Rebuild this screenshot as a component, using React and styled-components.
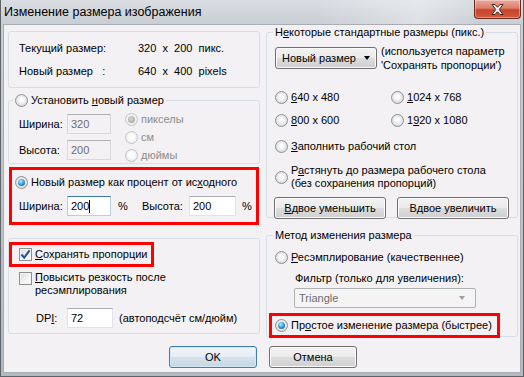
import React from 'react';
import styled, { createGlobalStyle, css } from 'styled-components';

const GlobalStyle = createGlobalStyle`
  html, body {
    margin: 0;
    padding: 0;
  }
  body {
    width: 524px;
    height: 377px;
    overflow: hidden;
    font-family: "Liberation Sans", Arial, sans-serif;
    font-size: 11px;
    color: #000;
  }
`;

/** Resize image dialog */
const App = () => {
  return (
    <>
      <GlobalStyle />
      <St.Window>
        <St.TitleBar>
          <St.TitleText>Изменение размера изображения</St.TitleText>
          <St.CloseButton>
            <svg width="15" height="13" viewBox="0 0 15 13">
              <path
                d="M2 1.5 L5 1.5 L7.5 4.3 L10 1.5 L13 1.5 L9.2 6.5 L13 11.5 L10 11.5 L7.5 8.7 L5 11.5 L2 11.5 L5.8 6.5 Z"
                fill="#fff"
                stroke="#4a1b12"
                strokeWidth="1"
                strokeLinejoin="round"
              />
            </svg>
          </St.CloseButton>
        </St.TitleBar>

        <St.Client>
          <St.Columns>
            <St.Column>
              <St.InfoBox>
                <St.InfoGrid>
                  <span>Текущий размер:</span>
                  <St.Value>320  x  200  пикс.</St.Value>
                  <span>Новый размер   :</span>
                  <St.Value>640  x  400  pixels</St.Value>
                </St.InfoGrid>
              </St.InfoBox>

              <St.Group $h={70} $mt={6}>
                <St.Legend $offset={4}>
                  <St.Option>
                    <St.Radio />
                    <span>
                      Установить <U>н</U>овый размер
                    </span>
                  </St.Option>
                </St.Legend>
                <St.SizeBlock>
                  <St.FieldStack>
                    <St.FieldRow>
                      <St.FieldLabel $w={48}>Ширина:</St.FieldLabel>
                      <St.Input $w={44} $state="disabled">320</St.Input>
                    </St.FieldRow>
                    <St.FieldRow>
                      <St.FieldLabel $w={48}>Высота:</St.FieldLabel>
                      <St.Input $w={44} $state="disabled">200</St.Input>
                    </St.FieldRow>
                  </St.FieldStack>
                  <St.UnitStack>
                    <St.Option $disabled>
                      <St.Radio $checked $disabled />
                      <span>пикселы</span>
                    </St.Option>
                    <St.Option $disabled>
                      <St.Radio $disabled />
                      <span>см</span>
                    </St.Option>
                    <St.Option $disabled>
                      <St.Radio $disabled />
                      <span>дюймы</span>
                    </St.Option>
                  </St.UnitStack>
                </St.SizeBlock>
              </St.Group>

              <St.RedFrame $w={250} $h={58} $mt={3} $ml={1} $pad="6px 0 0 3px">
                <St.Option>
                  <St.Radio $checked />
                  <span>
                    Новый размер как процент от ис<U>х</U>одного
                  </span>
                </St.Option>
                <St.FieldRow $mt={7} $ml={4}>
                  <St.FieldLabel $w={48}>Ширина:</St.FieldLabel>
                  <St.Input $w={44} $state="focus">
                    200
                    <St.Caret />
                  </St.Input>
                  <St.FieldLabel $w={24} $ml={7}>%</St.FieldLabel>
                  <St.FieldLabel $w={47}>Высота:</St.FieldLabel>
                  <St.Input $w={47}>200</St.Input>
                  <St.FieldLabel $ml={6}>%</St.FieldLabel>
                </St.FieldRow>
              </St.RedFrame>

              <St.Group $h={96} $mt={13}>
                <St.RedFrame $w={145} $h={25} $mt={3} $pad="0 0 0 7px" $center>
                  <St.Option>
                    <St.Check $checked>
                      <svg width="11" height="11" viewBox="0 0 11 11">
                        <path
                          d="M1.5 5.5 L4.2 8.6 L9.6 1.4"
                          fill="none"
                          stroke="#1c4fa0"
                          strokeWidth="2"
                        />
                      </svg>
                    </St.Check>
                    <span>
                      <U>С</U>охранять пропорции
                    </span>
                  </St.Option>
                </St.RedFrame>
                <St.Option $top $mt={4} $ml={10}>
                  <St.Check $mt={1} />
                  <span>
                    <U>П</U>овысить резкость после
                    <br />
                    ресэмплирования
                  </span>
                </St.Option>
                <St.FieldRow $mt={11} $ml={27}>
                  <St.FieldLabel $w={31}>
                    DP<U>I</U>:
                  </St.FieldLabel>
                  <St.Input $w={46}>72</St.Input>
                  <St.FieldLabel $ml={6}>(автоподсчёт см/дюйм)</St.FieldLabel>
                </St.FieldRow>
              </St.Group>
            </St.Column>

            <St.Column $right>
              <St.Group $h={192}>
                <St.Legend $offset={6}>
                  Н<U>е</U>которые стандартные размеры (пикс.)
                </St.Legend>
                <St.PresetRow>
                  <St.Combo $w={102} $h={22}>
                    <span>Новый размер</span>
                    <St.Arrow />
                  </St.Combo>
                  <St.Note>
                    (используется параметр
                    <br />
                    'Сохранять пропорции')
                  </St.Note>
                </St.PresetRow>
                <St.SizeGrid>
                  <St.Option>
                    <St.Radio />
                    <span>
                      <U>6</U>40 x 480
                    </span>
                  </St.Option>
                  <St.Option>
                    <St.Radio />
                    <span>
                      <U>1</U>024 x 768
                    </span>
                  </St.Option>
                  <St.Option>
                    <St.Radio />
                    <span>
                      <U>8</U>00 x 600
                    </span>
                  </St.Option>
                  <St.Option>
                    <St.Radio />
                    <span>
                      1<U>9</U>20 x 1080
                    </span>
                  </St.Option>
                </St.SizeGrid>
                <St.Option $mt={13} $ml={8}>
                  <St.Radio />
                  <span>
                    <U>З</U>аполнить рабочий стол
                  </span>
                </St.Option>
                <St.Option $mt={9} $ml={8}>
                  <St.Radio />
                  <span>
                    Р<U>а</U>стянуть до размера рабочего стола
                    <br />
                    (без сохранения пропорций)
                  </span>
                </St.Option>
                <St.ButtonRow $mt={7} $ml={7} $gap={11}>
                  <St.Button $w={112}>
                    <U>В</U>двое уменьшить
                  </St.Button>
                  <St.Button $w={112}>
                    В<U>д</U>вое увеличить
                  </St.Button>
                </St.ButtonRow>
              </St.Group>

              <St.Group $h={108} $mt={11}>
                <St.Legend $offset={6}>Метод изменения размера</St.Legend>
                <St.Option $mt={9} $ml={8}>
                  <St.Radio />
                  <span>
                    <U>Р</U>есэмплирование (качественнее)
                  </span>
                </St.Option>
                <St.FieldLabel $block $mt={6} $ml={28}>
                  Фильтр (только для увеличения):
                </St.FieldLabel>
                <St.Combo $w={182} $h={20} $mt={3} $ml={27} $disabled>
                  <span>Triangle</span>
                  <St.Arrow $disabled />
                </St.Combo>
                <St.RedFrame $w={231} $h={25} $mt={5} $ml={2} $pad="0 0 0 3px" $center>
                  <St.Option>
                    <St.Radio $checked />
                    <span>
                      Пр<U>о</U>стое изменение размера (быстрее)
                    </span>
                  </St.Option>
                </St.RedFrame>
              </St.Group>
            </St.Column>
          </St.Columns>

          <St.ButtonRow $mt={9} $gap={12} $centered>
            <St.Button $w={88} $default>
              OK
            </St.Button>
            <St.Button $w={88}>Отмена</St.Button>
          </St.ButtonRow>
        </St.Client>
      </St.Window>
    </>
  );
};

export default App;

const U = styled.span`
  text-decoration: underline;
  text-underline-offset: 1px;
`;

const offsets = css`
  margin-top: ${({ $mt }) => $mt || 0}px;
  margin-left: ${({ $ml }) => $ml || 0}px;
`;

const St = {
  Window: styled.div`
    width: 524px;
    height: 377px;
    box-sizing: border-box;
    display: flex;
    flex-direction: column;
    border: 1px solid #5e6369;
    border-top: none;
    background: linear-gradient(180deg, #dadee3 0px, #c9ced4 24px, #b3b9c0 100%);
  `,

  TitleBar: styled.div`
    height: 24px;
    flex: none;
    display: flex;
    justify-content: space-between;
    align-items: flex-start;
    background: linear-gradient(90deg, rgba(255, 255, 255, 0) 60%, rgba(255, 255, 255, 0.35) 80%, rgba(255, 255, 255, 0) 92%);
  `,

  TitleText: styled.div`
    padding: 4px 0 0 3px;
    font-size: 12.5px;
    line-height: 16px;
    color: #000;
  `,

  CloseButton: styled.div`
    width: 47px;
    height: 19px;
    box-sizing: border-box;
    margin-right: 2px;
    display: flex;
    align-items: center;
    justify-content: center;
    border: 1px solid #6b2a1f;
    border-top: none;
    border-radius: 0 0 4px 4px;
    background: linear-gradient(180deg, #e9aa9c 0%, #dc7e6a 45%, #c7432b 55%, #d35a3c 100%);
    box-shadow: inset 0 0 0 1px rgba(255, 255, 255, 0.35);
  `,

  Client: styled.div`
    flex: 1;
    margin: 0 2px 3px 2px;
    padding: 1px 2px 0 4px;
    border: 1px solid #a9aeb4;
    background: #f3f1f3;
    display: flex;
    flex-direction: column;
  `,

  Columns: styled.div`
    display: flex;
    gap: 6px;
    align-items: flex-start;
  `,

  Column: styled.div`
    width: 252px;
    display: flex;
    flex-direction: column;
  `,

  InfoBox: styled.div`
    box-sizing: border-box;
    height: 57px;
    margin-top: 5px;
    padding: 10px 0 0 10px;
    border: 1px solid #d5dfe5;
    border-radius: 3px;
  `,

  InfoGrid: styled.div`
    display: grid;
    grid-template-columns: 119px auto;
    row-gap: 10px;
    line-height: 13px;
    white-space: pre;
  `,

  Value: styled.span`
    white-space: pre;
  `,

  Group: styled.fieldset`
    box-sizing: border-box;
    height: ${({ $h }) => $h}px;
    margin: ${({ $mt }) => $mt || 0}px 0 0 0;
    padding: 0;
    min-width: 0;
    border: 1px solid #d5dfe5;
    border-radius: 3px;
  `,

  Legend: styled.legend`
    margin-left: ${({ $offset }) => $offset}px;
    padding: 0 2px;
    line-height: 13px;
    height: 13px;
  `,

  Option: styled.div`
    display: ${({ $block }) => ($block ? 'flex' : 'inline-flex')};
    align-items: ${({ $top }) => ($top ? 'flex-start' : 'center')};
    gap: 3px;
    line-height: 13px;
    color: ${({ $disabled }) => ($disabled ? '#8d8d8d' : '#000')};
    ${offsets}
    align-self: flex-start;
  `,

  Radio: styled.span`
    flex: none;
    width: 13px;
    height: 13px;
    box-sizing: border-box;
    border-radius: 50%;
    position: relative;
    border: 1px solid ${({ $disabled }) => ($disabled ? '#c2c4c6' : '#8e9194')};
    background: ${({ $disabled }) =>
      $disabled
        ? 'radial-gradient(circle at 50% 45%, #fbfbfb 30%, #e4e4e4 100%)'
        : 'radial-gradient(circle at 50% 45%, #ffffff 15%, #d2d4d6 85%, #c4c6c8 100%)'};
    &::after {
      content: '';
      position: absolute;
      inset: 2px;
      border-radius: 50%;
      display: ${({ $checked }) => ($checked ? 'block' : 'none')};
      background: ${({ $disabled }) =>
        $disabled
          ? 'radial-gradient(circle at 45% 40%, #d8d8d8 0%, #9a9a9a 100%)'
          : 'radial-gradient(circle at 40% 35%, #bfeeff 0%, #3ca3da 45%, #0d4a86 100%)'};
    }
  `,

  Check: styled.span`
    flex: none;
    width: 13px;
    height: 13px;
    box-sizing: border-box;
    margin-top: ${({ $mt }) => $mt || 0}px;
    display: flex;
    align-items: center;
    justify-content: center;
    border: 1px solid #8e8f8f;
    background: linear-gradient(135deg, #dcdcdc 0%, #f4f4f4 60%, #ffffff 100%);
    box-shadow: inset 0 0 0 1px #f4f4f4;
  `,

  SizeBlock: styled.div`
    display: flex;
    align-items: flex-start;
    padding: 7px 0 0 10px;
  `,

  FieldStack: styled.div`
    display: flex;
    flex-direction: column;
    gap: 6px;
  `,

  UnitStack: styled.div`
    display: flex;
    flex-direction: column;
    gap: 5px;
    margin: -1px 0 0 14px;
  `,

  FieldRow: styled.div`
    display: flex;
    align-items: center;
    height: 20px;
    ${offsets}
  `,

  FieldLabel: styled.span`
    display: ${({ $block }) => ($block ? 'block' : 'inline-block')};
    flex: none;
    width: ${({ $w }) => ($w ? `${$w}px` : 'auto')};
    line-height: 13px;
    white-space: nowrap;
    ${offsets}
  `,

  Input: styled.div`
    flex: none;
    box-sizing: border-box;
    width: ${({ $w }) => $w}px;
    height: 20px;
    padding-left: 3px;
    display: flex;
    align-items: center;
    line-height: 13px;
    border: 1px solid #e0e3ea;
    border-top-color: #abadb3;
    background: #fff;
    color: #000;
    ${({ $state }) =>
      $state === 'disabled' &&
      css`
        background: #f3f1f3;
        border-color: #d9d9d9;
        border-top-color: #b0b0b0;
        color: #6d6d6d;
      `}
    ${({ $state }) =>
      $state === 'focus' &&
      css`
        border-color: #b5cfe7;
        border-top-color: #3d7bad;
      `}
  `,

  Caret: styled.span`
    width: 1px;
    height: 13px;
    background: #000;
  `,

  RedFrame: styled.div`
    box-sizing: border-box;
    width: ${({ $w }) => $w}px;
    height: ${({ $h }) => $h}px;
    padding: ${({ $pad }) => $pad};
    border: 3px solid #ff0000;
    display: flex;
    flex-direction: column;
    justify-content: ${({ $center }) => ($center ? 'center' : 'flex-start')};
    ${offsets}
  `,

  PresetRow: styled.div`
    display: flex;
    align-items: flex-start;
    padding: 8px 0 0 8px;
  `,

  Combo: styled.div`
    box-sizing: border-box;
    width: ${({ $w }) => $w}px;
    height: ${({ $h }) => $h}px;
    flex: none;
    display: flex;
    align-items: center;
    justify-content: space-between;
    padding: 0 6px 0 6px;
    border-radius: 3px;
    ${offsets}
    ${({ $disabled }) =>
      $disabled
        ? css`
            border: 1px solid #adb2b5;
            background: #f4f4f4;
            color: #6d6d6d;
            padding-left: 4px;
            border-radius: 2px;
          `
        : css`
            border: 1px solid #707070;
            background: linear-gradient(180deg, #f2f2f2 0%, #ebebeb 50%, #dddddd 50%, #cfcfcf 100%);
            box-shadow: inset 0 0 0 1px #fbfbfb;
          `}
  `,

  Arrow: styled.span`
    width: 0;
    height: 0;
    border-left: 3.5px solid transparent;
    border-right: 3.5px solid transparent;
    border-top: 4px solid ${({ $disabled }) => ($disabled ? '#a0a0a0' : '#000')};
    margin-right: ${({ $disabled }) => ($disabled ? '4px' : '0')};
  `,

  Note: styled.div`
    margin: -3px 0 0 4px;
    line-height: 14px;
    white-space: nowrap;
  `,

  SizeGrid: styled.div`
    display: grid;
    grid-template-columns: 116px auto;
    row-gap: 10px;
    margin: 19px 0 0 8px;
  `,

  ButtonRow: styled.div`
    display: flex;
    gap: ${({ $gap }) => $gap}px;
    justify-content: ${({ $centered }) => ($centered ? 'center' : 'flex-start')};
    ${offsets}
  `,

  Button: styled.div`
    box-sizing: border-box;
    width: ${({ $w }) => $w}px;
    height: 22px;
    display: flex;
    align-items: center;
    justify-content: center;
    line-height: 13px;
    border-radius: 3px;
    border: 1px solid ${({ $default }) => ($default ? '#3c7fb1' : '#707070')};
    background: ${({ $default }) =>
      $default
        ? 'linear-gradient(180deg, #f1f5f8 0%, #e5edf3 50%, #d6e2eb 50%, #c9d7e2 100%)'
        : 'linear-gradient(180deg, #f2f2f2 0%, #ebebeb 50%, #dddddd 50%, #cfcfcf 100%)'};
    box-shadow: inset 0 0 0 1px ${({ $default }) => ($default ? '#cfe9f8' : '#fbfbfb')};
  `,
};
